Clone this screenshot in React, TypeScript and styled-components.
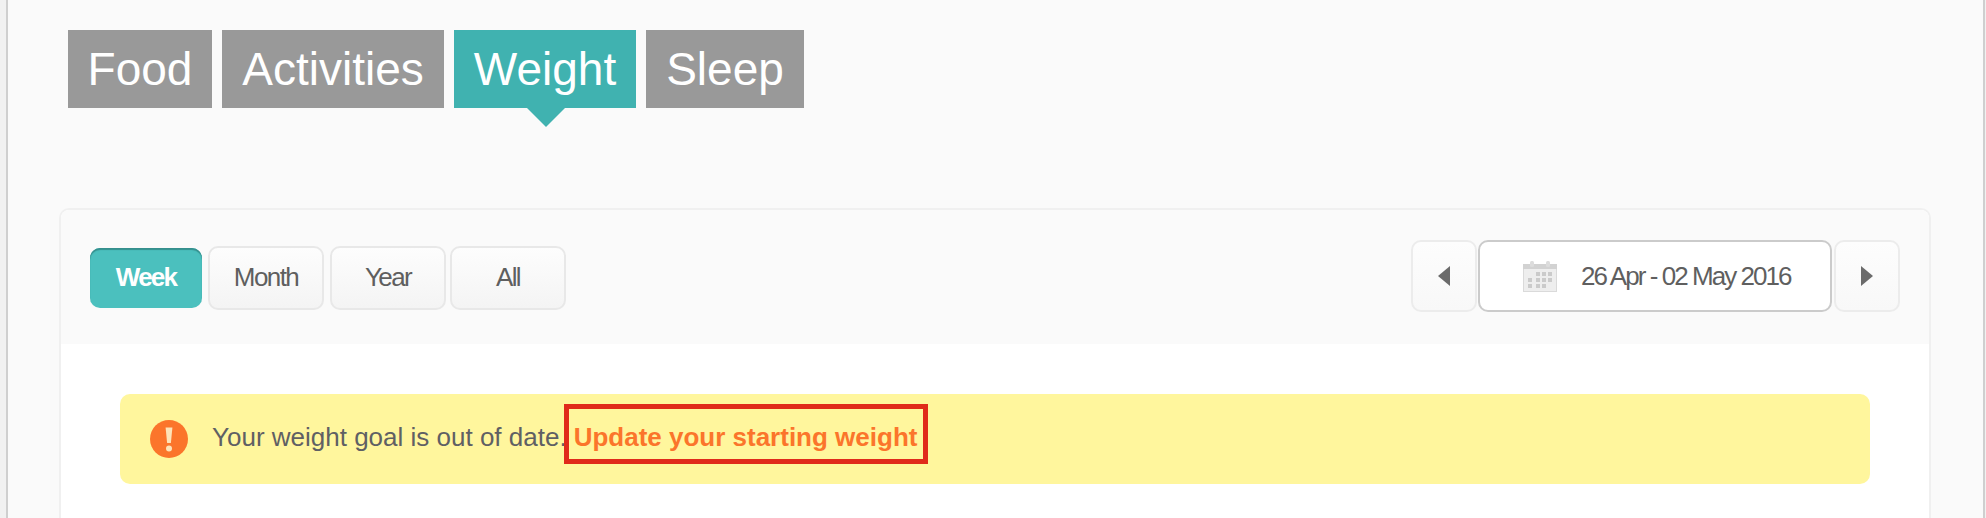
import React from "react";
import styled, { createGlobalStyle } from "styled-components";

const Global = createGlobalStyle`
  html, body { margin: 0; padding: 0; background: #f1f1f1; }
  body { font-family: "Liberation Sans", Arial, sans-serif; }
`;

const Page = styled.div`
  box-sizing: border-box;
  width: 1979px;
  height: 518px;
  overflow: hidden;
  margin-left: 6px;
  background: #fafafa;
  border-left: 2px solid #cfcfcf;
  border-right: 2px solid #cfcfcf;
  padding: 30px 52px 0 51px;
`;

const Tabs = styled.nav`
  display: flex;
  gap: 10px;
  margin-left: 9px;
  height: 78px;
`;

const Tab = styled.div<{ $active?: boolean; $w: number }>`
  position: relative;
  width: ${(p) => p.$w}px;
  height: 78px;
  flex: none;
  display: flex;
  align-items: center;
  justify-content: center;
  background: ${(p) => (p.$active ? "#40b2b0" : "#999999")};
  color: #fff;
  font-size: 46px;
  ${(p) =>
    p.$active
      ? `&::after {
    content: "";
    position: absolute;
    left: 73px;
    top: 78px;
    border-left: 19px solid transparent;
    border-right: 19px solid transparent;
    border-top: 19px solid #40b2b0;
  }`
      : ""}
`;

const Panel = styled.section`
  margin-top: 100px;
  height: 400px;
  border: 2px solid #f0f0f0;
  border-bottom: none;
  border-radius: 10px 10px 0 0;
  background: #fff;
  overflow: hidden;
`;

const PanelHeader = styled.header`
  height: 134px;
  box-sizing: border-box;
  background: #fafafa;
  padding: 36px 29px 0 29px;
  display: flex;
  justify-content: space-between;
  align-items: flex-start;
`;

const RangeGroup = styled.div`
  display: flex;
  gap: 6px;
  align-items: center;
  height: 64px;
`;

const RangeButton = styled.div<{ $active?: boolean }>`
  box-sizing: border-box;
  width: ${(p) => (p.$active ? 112 : 116)}px;
  height: ${(p) => (p.$active ? 60 : 64)}px;
  padding-bottom: 2px;
  border-radius: 10px;
  display: flex;
  align-items: center;
  justify-content: center;
  font-size: 26px;
  letter-spacing: ${(p) => (p.$active ? -1.8 : -1.6)}px;
  &:last-child { margin-left: -2px; }
  ${(p) =>
    p.$active
      ? `background: #4bc0be;
         color: #fff;
         font-weight: 700;
         box-shadow: inset 0 2px 1px #358f8d;`
      : `background: linear-gradient(#fdfdfd, #f4f4f4);
         color: #5f5f5f;
         border: 2px solid #e8e8e8;`}
`;

const DateGroup = styled.div`
  display: flex;
  align-items: stretch;
  height: 72px;
  margin-top: -6px;
`;

const ArrowButton = styled.div`
  box-sizing: border-box;
  width: 66px;
  display: flex;
  align-items: center;
  justify-content: center;
  border: 2px solid #ececec;
  border-radius: 10px;
  background: linear-gradient(#fdfdfd, #f8f8f8);
`;

const DateBox = styled.div`
  box-sizing: border-box;
  width: 354px;
  margin: 0 2px 0 1px;
  background: #fff;
  border: 2px solid #cbcbcb;
  border-radius: 10px;
  display: flex;
  align-items: center;
  padding-left: 43px;
  gap: 24px;
  color: #5f5f5f;
  font-size: 26px;
  letter-spacing: -1.95px;
  white-space: nowrap;
`;

const PanelBody = styled.div`
  padding: 50px 59px 0 59px;
`;

const Alert = styled.div`
  height: 90px;
  border-radius: 10px;
  background: #fff69d;
  display: flex;
  align-items: flex-start;
  padding-left: 30px;
  color: #5f6064;
  font-size: 26px;
  line-height: 30px;
`;

const AlertIcon = styled.svg`
  width: 38px;
  height: 38px;
  flex: none;
  margin: 26px 24px 0 0;
`;

const AlertText = styled.span`
  margin: 28px -3px 0 0;
  white-space: nowrap;
`;

const AlertLink = styled.span`
  box-sizing: border-box;
  height: 60px;
  width: 364px;
  margin-top: 10px;
  border: 5px solid #e02a1a;
  display: flex;
  align-items: center;
  padding: 6px 0 0 5px;
  color: #fb752b;
  font-weight: 700;
  white-space: nowrap;
`;

const Triangle = ({ dir }: { dir: "left" | "right" }) => (
  <svg width="12" height="20" viewBox="0 0 12 20">
    <path d={dir === "left" ? "M12 0V20L0 10Z" : "M0 0V20L12 10Z"} fill="#6b6b6b" />
  </svg>
);

const Calendar = () => (
  <svg width="34" height="31" viewBox="0 0 34 31">
    <rect x="0.5" y="3.5" width="33" height="27" fill="#eeeeee" stroke="#dadada" />
    <rect x="0" y="3" width="34" height="5" fill="#d2d2d2" />
    <rect x="7" y="0" width="4" height="6" rx="1.5" fill="#dcdcdc" />
    <rect x="23" y="0" width="4" height="6" rx="1.5" fill="#dcdcdc" />
    {[
      [13, 11], [19, 11], [25, 11],
      [5, 17], [13, 17], [19, 17], [25, 17],
      [5, 23], [13, 23], [19, 23],
    ].map(([x, y]) => (
      <rect key={`${x}-${y}`} x={x} y={y} width="4" height="4" fill="#cbcbcb" />
    ))}
  </svg>
);

export default function App() {
  return (
    <>
      <Global />
      <Page>
        <Tabs>
          <Tab $w={144}>Food</Tab>
          <Tab $w={222}>Activities</Tab>
          <Tab $w={182} $active>Weight</Tab>
          <Tab $w={158}>Sleep</Tab>
        </Tabs>
        <Panel>
          <PanelHeader>
            <RangeGroup>
              <RangeButton $active>Week</RangeButton>
              <RangeButton>Month</RangeButton>
              <RangeButton>Year</RangeButton>
              <RangeButton>All</RangeButton>
            </RangeGroup>
            <DateGroup>
              <ArrowButton><Triangle dir="left" /></ArrowButton>
              <DateBox><Calendar />26 Apr - 02 May 2016</DateBox>
              <ArrowButton><Triangle dir="right" /></ArrowButton>
            </DateGroup>
          </PanelHeader>
          <PanelBody>
            <Alert>
              <AlertIcon viewBox="0 0 38 38">
                <circle cx="19" cy="19" r="19" fill="#fb752b" />
                <path d="M15.6 7.5h6.8l-1.5 15.5h-3.8Z" fill="#fde3b8" />
                <circle cx="19" cy="28.5" r="3" fill="#fde3b8" />
              </AlertIcon>
              <AlertText>Your weight goal is out of date.</AlertText>
              <AlertLink>Update your starting weight</AlertLink>
            </Alert>
          </PanelBody>
        </Panel>
      </Page>
    </>
  );
}
